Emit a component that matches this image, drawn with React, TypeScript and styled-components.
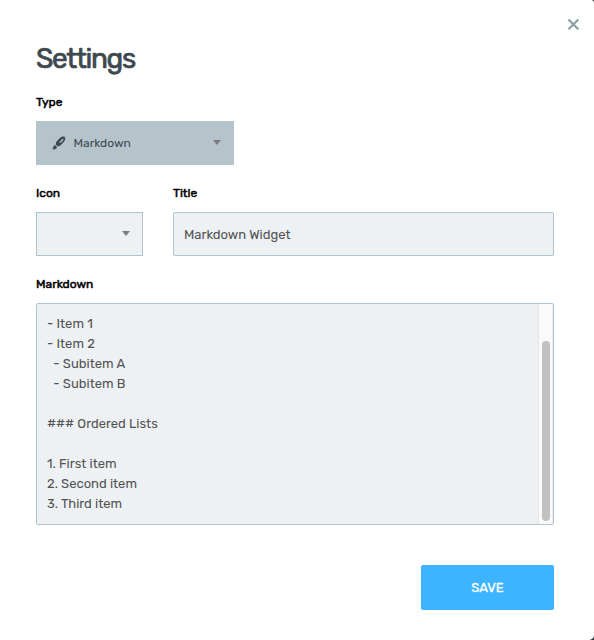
import React from 'react';
import styled, { createGlobalStyle } from 'styled-components';

const GlobalStyle = createGlobalStyle`
  * { box-sizing: border-box; }
  body { margin: 0; background: #30383c; overflow: hidden; }
`;

const Dialog = styled.main`
  width: 594px;
  height: 640px;
  padding: 39px 40px 30px 36px;
  position: relative;
  display: flex;
  flex-direction: column;
  background: #fff;
  border-radius: 0 3px 5px 0;
  font-family: Rubik, Roboto, sans-serif;
`;

const CloseButton = styled.button`
  position: absolute;
  top: 18px;
  right: 14px;
  width: 13px;
  height: 13px;
  padding: 0;
  border: 0;
  background: none;
  svg { display: block; }
`;

const Heading = styled.h1`
  margin: 0;
  height: 40px;
  line-height: 40px;
  font-size: 28px;
  font-weight: 400;
  letter-spacing: -1.35px;
  color: #3d494f;
  -webkit-text-stroke: 0.7px #3d494f;
`;

const Label = styled.label`
  display: block;
  height: 18px;
  line-height: 18px;
  font-size: 12px;
  font-weight: 400;
  color: #000;
  -webkit-text-stroke: 0.5px #000;
`;

const Field = styled.div<{ $width: number; $top: number }>`
  width: ${p => p.$width}px;
  margin-top: ${p => p.$top}px;
  display: flex;
  flex-direction: column;
  gap: 10px;
`;

const FieldRow = styled.div`
  display: flex;
  gap: 30px;
`;

const TypeSelect = styled.div`
  height: 44px;
  padding: 0 13px 0 16px;
  display: flex;
  align-items: center;
  background: #b5c4cb;
  color: #3d494f;
  font-size: 12px;
`;

const SelectText = styled.span`
  flex: 1;
  margin-left: 7.5px;
`;

const Caret = styled.span`
  margin-bottom: 2px;
  border: 4px solid transparent;
  border-top: 5px solid #7c7c7c;
  border-bottom: 0;
`;

const IconSelect = styled.div`
  height: 44px;
  padding-right: 12px;
  display: flex;
  align-items: center;
  justify-content: flex-end;
  background: #edf1f4;
  border: 1px solid #b0c3cc;
`;

const TextInput = styled.div`
  height: 44px;
  padding: 0 10px;
  line-height: 43px;
  background: #edf1f4;
  border: 1px solid #b0c3cc;
  border-radius: 2px;
  color: #525252;
  font-size: 13px;
`;

const Editor = styled.div`
  height: 222px;
  display: flex;
  background: #edf1f4;
  border: 1px solid #b0c3cc;
  border-radius: 2px;
  overflow: hidden;
`;

const Source = styled.div`
  flex: 1;
  padding: 10px;
  color: #525252;
  font-size: 13px;
  line-height: 20px;
  white-space: pre;
`;

const Track = styled.div`
  width: 15px;
  padding: 37px 3px 3px;
  background: #fafafa;
  border-left: 1px solid #e5e5e5;
  border-right: 1px solid #ededed;
`;

const Thumb = styled.div`
  width: 8px;
  height: 180px;
  border-radius: 4px;
  background: #c1c1c1;
`;

const SaveButton = styled.button`
  width: 133px;
  height: 45px;
  margin-top: auto;
  padding: 0;
  align-self: flex-end;
  border: 0;
  border-radius: 2px;
  background: #3db4ff;
  color: #fff;
  font: 400 13px Rubik, Roboto, sans-serif;
  -webkit-text-stroke: 0.3px #fff;
`;

const source = `- Item 1
- Item 2
  - Subitem A
  - Subitem B

### Ordered Lists

1. First item
2. Second item
3. Third item`;

const BrushIcon = () => (
  <svg width="14" height="14" viewBox="0 0 14 14">
    <path d="M3.6 8.3 4.4 5.7 7.6 2.3C9.2.7 11.7.1 12.8 1.1c1 1 .4 3.4-1.1 5L8.4 9.5l-2.7.9Z" fill="#3d494f" />
    <path d="m7.3 6.2 2.5-2.8c.6-.6 1.2-.7 1.5-.4.3.3.1.9-.4 1.4L8.3 7.1Z" fill="#b5c4cb" />
    <path d="M2.7 8.9 5.2 11.2c-.8 1.5-2.6 2.3-4.8 2.2.9-.8.5-1.7 1-2.9.3-.7.7-1.2 1.3-1.6Z" fill="#3d494f" />
  </svg>
);

export default function App() {
  return (
    <>
      <GlobalStyle />
      <Dialog>
        <CloseButton aria-label="Close">
          <svg width="13" height="13" viewBox="0 0 13 13">
            <path d="m1.5 1.5 9.8 9.8m0-9.8-9.8 9.8" stroke="#8b9da5" strokeWidth="2.1" />
          </svg>
        </CloseButton>
        <Heading>Settings</Heading>
        <Field $width={198} $top={14}>
          <Label>Type</Label>
          <TypeSelect><BrushIcon /><SelectText>Markdown</SelectText><Caret /></TypeSelect>
        </Field>
        <FieldRow>
          <Field $width={107} $top={19}>
            <Label>Icon</Label>
            <IconSelect><Caret /></IconSelect>
          </Field>
          <Field $width={381} $top={19}>
            <Label>Title</Label>
            <TextInput>Markdown Widget</TextInput>
          </Field>
        </FieldRow>
        <Field $width={518} $top={19}>
          <Label>Markdown</Label>
          <Editor>
            <Source>{source}</Source>
            <Track><Thumb /></Track>
          </Editor>
        </Field>
        <SaveButton>SAVE</SaveButton>
      </Dialog>
    </>
  );
}
